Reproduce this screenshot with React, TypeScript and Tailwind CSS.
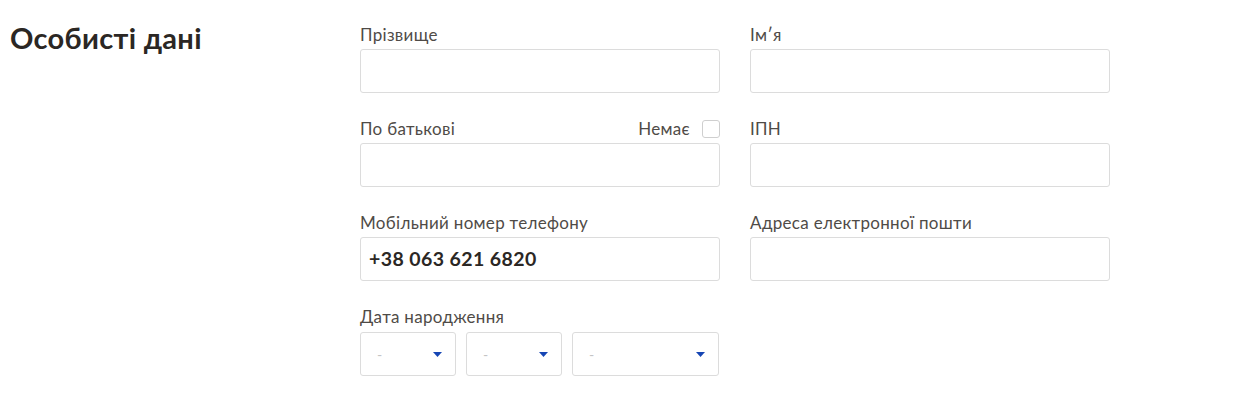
import React from 'react';

// поле форми з підписом
interface FieldProps {
  label: string;
  value?: string;
  extra?: React.ReactNode;
}

const Field: React.FC<FieldProps> = ({ label, value, extra }) => (
  <div className="flex flex-col">
    <div className="flex items-center justify-between h-5 mb-1">
      <span className="text-[17px] leading-5 tracking-[0.3px] text-[#4f4b47]">{label}</span>
      {extra}
    </div>
    <div className="h-[44px] border border-[#dcdcdc] rounded-[3px] bg-white flex items-center px-2">
      {value && <span className="text-[19.5px] font-bold text-[#2b2724] tracking-[0.4px]">{value}</span>}
    </div>
  </div>
);

const Select: React.FC<{ width: string }> = ({ width }) => (
  <div className={`${width} h-[44px] border border-[#dcdcdc] rounded-[3px] bg-white flex items-center justify-between pl-4 pr-[13px]`}>
    <span className="text-[14px] text-[#c4c4c4]">-</span>
    <svg width="9" height="5" viewBox="0 0 9 5">
      <path d="M0 0 L9 0 L4.5 5 Z" fill="#1646b4" />
    </svg>
  </div>
);

export default function App() {
  return (
    <div className="w-[1245px] h-[415px] bg-white flex" style={{ fontFamily: 'Lato, "Open Sans", sans-serif' }}>
      <div className="w-[360px] pl-[10px] pt-[20px]">
        <h2 className="text-[29px] font-bold text-[#2b2724] leading-9 tracking-[0.3px]">Особисті дані</h2>
      </div>
      <div className="pt-[25px] grid grid-cols-[360px_360px] gap-x-[30px] gap-y-[26px] content-start">
        <Field label="Прізвище" />
        <Field label="Ім′я" />
        <Field
          label="По батькові"
          extra={
            <div className="flex items-center gap-3">
              <span className="text-[17px] leading-5 tracking-[0.3px] text-[#4f4b47]">Немає</span>
              <div className="w-[18px] h-[18px] border border-[#cfcfcf] rounded-[3px]" />
            </div>
          }
        />
        <Field label="ІПН" />
        <Field label="Мобільний номер телефону" value="+38 063 621 6820" />
        <Field label="Адреса електронної пошти" />
        <div className="flex flex-col">
          <div className="h-5 mb-1 text-[17px] leading-5 tracking-[0.3px] text-[#4f4b47]">Дата народження</div>
          <div className="flex gap-[10px] mt-px">
            <Select width="w-[96px]" />
            <Select width="w-[96px]" />
            <Select width="w-[147px]" />
          </div>
        </div>
      </div>
    </div>
  );
}
